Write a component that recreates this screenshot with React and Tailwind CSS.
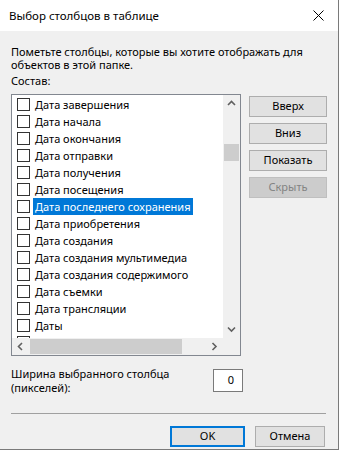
import React from 'react';

const items = [
  'Дата завершения',
  'Дата начала',
  'Дата окончания',
  'Дата отправки',
  'Дата получения',
  'Дата посещения',
  'Дата последнего сохранения',
  'Дата приобретения',
  'Дата создания',
  'Дата создания мультимедиа',
  'Дата создания содержимого',
  'Дата съемки',
  'Дата трансляции',
  'Даты',
  'Длительность',
];

const Chevron = ({ dir }) => {
  const paths = {
    up: 'M1 5 L4.5 1.5 L8 5',
    down: 'M1 1.5 L4.5 5 L8 1.5',
    left: 'M5 1 L1.5 4.5 L5 8',
    right: 'M1.5 1 L5 4.5 L1.5 8',
  };
  const horiz = dir === 'left' || dir === 'right';
  return (
    <svg width={horiz ? 7 : 9} height={horiz ? 9 : 7} viewBox={horiz ? '0 0 7 9' : '0 0 9 7'}>
      <path d={paths[dir]} fill="none" stroke="#606060" strokeWidth="1.6" />
    </svg>
  );
};

const Button = ({ children, disabled, primary, className = '' }) => (
  <div
    className={`flex items-center justify-center h-[21px] text-[11px] ${
      disabled
        ? 'bg-[#cccccc] border border-[#bfbfbf] text-[#838383]'
        : primary
        ? 'bg-[#e1e1e1] border-2 border-[#0078d7] text-black'
        : 'bg-[#e1e1e1] border border-[#adadad] text-black'
    } ${className}`}
  >
    {children}
  </div>
);

export default function App() {
  return (
    <div className="w-[343px] h-[451px] bg-white" style={{ fontFamily: '"Noto Sans", sans-serif' }}>
      <div className="w-[339px] h-[450px] bg-[#f0f0f0] border-r border-b border-[#7a7a7a] flex flex-col">
        {/* Title bar */}
        <div className="h-[31px] bg-white flex items-center justify-between pl-[9px] pr-[14px] shrink-0">
          <span className="text-[11.5px] text-black">Выбор столбцов в таблице</span>
          <svg width="11" height="11" viewBox="0 0 11 11">
            <path d="M0.5 0.5 L10.5 10.5 M10.5 0.5 L0.5 10.5" stroke="#000" strokeWidth="1" />
          </svg>
        </div>

        <div className="flex-1 flex flex-col px-[11px] pt-[14px] text-[11px] text-black">
          <p className="leading-[13px]">
            Пометьте столбцы, которые вы хотите отображать для объектов в этой папке.
          </p>
          <p className="leading-[13px] mt-[3px]">Состав:</p>

          <div className="flex gap-[8px] mt-[7px] shrink-0">
            {/* List box */}
            <div className="w-[233px] h-[262px] bg-white border border-[#828790] flex flex-col">
              <div className="flex flex-1 min-h-0">
                <div className="flex-1 overflow-hidden pt-[1px]">
                  {items.map((item, i) => (
                    <div key={item} className="h-[17px] flex items-center pl-[5px] whitespace-nowrap">
                      <div className="w-[13px] h-[13px] border border-[#333333] bg-white shrink-0" />
                      <span
                        className={`ml-[3px] px-[2px] leading-[17px] ${
                          i === 6 ? 'bg-[#0078d7] text-white' : ''
                        }`}
                      >
                        {item}
                      </span>
                    </div>
                  ))}
                </div>
                <div className="w-[17px] bg-[#f0f0f0] flex flex-col items-center shrink-0">
                  <div className="h-[17px] flex items-center justify-center">
                    <Chevron dir="up" />
                  </div>
                  <div className="w-[15px] h-[17px] bg-[#cdcdcd] mt-[32px]" />
                  <div className="flex-1" />
                  <div className="h-[17px] flex items-center justify-center">
                    <Chevron dir="down" />
                  </div>
                </div>
              </div>
              <div className="h-[17px] flex shrink-0 bg-[#f0f0f0]">
                <div className="w-[17px] flex items-center justify-center">
                  <Chevron dir="left" />
                </div>
                <div className="w-[152px] h-[15px] mt-[1px] ml-[1px] bg-[#cdcdcd]" />
                <div className="flex-1" />
                <div className="w-[17px] flex items-center justify-center">
                  <Chevron dir="right" />
                </div>
                <div className="w-[17px] bg-[#f0f0f0]" />
              </div>
            </div>

            {/* Buttons */}
            <div className="w-[79px] flex flex-col gap-[6px] pt-[2px]">
              <Button>Вверх</Button>
              <Button>Вниз</Button>
              <Button>Показать</Button>
              <Button disabled>Скрыть</Button>
            </div>
          </div>

          {/* Width + separator */}
          <div className="w-[315px] mt-[11px] pb-[18px] border-b border-[#a0a0a0] shrink-0">
            <div className="flex items-start justify-between w-[232px]">
              <p className="leading-[14px]">
                Ширина выбранного столбца
                <br />
                (пикселей):
              </p>
              <div className="w-[30px] h-[23px] mt-[2px] bg-white border border-[#7a7a7a] flex items-center justify-end pr-[8px]">
                0
              </div>
            </div>
          </div>

          <div className="flex justify-end gap-[10px] mt-[12px] pr-[2px] shrink-0">
            <Button primary className="w-[75px]">OK</Button>
            <Button className="w-[70px]">Отмена</Button>
          </div>
        </div>
      </div>
    </div>
  );
}
